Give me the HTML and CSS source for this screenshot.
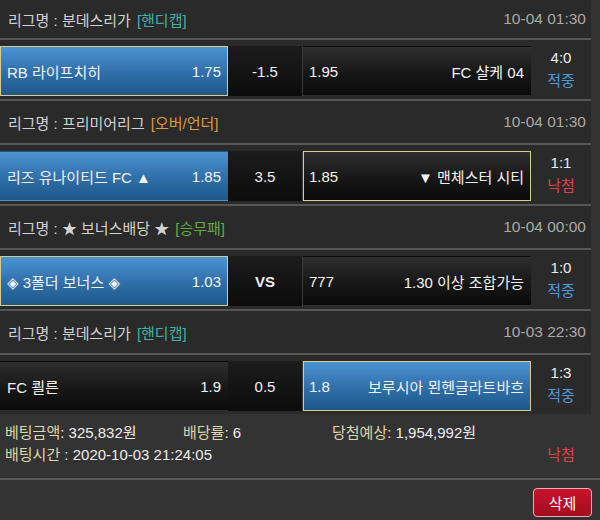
FILE: index.html
```html
<!DOCTYPE html>
<html lang="ko">
<head>
<meta charset="utf-8">
<title>배팅내역</title>
<link rel="stylesheet" href="styles.css">
</head>
<body>
<div class="page">
  <div class="list">
    <section class="game">
      <div class="league first">
        <span class="lname">리그명 : 분데스리가</span>
        <span class="ltype teal">[핸디캡]</span>
        <span class="date">10-04 01:30</span>
      </div>
      <div class="match">
        <div class="bar">
          <div class="team blue pick"><span>RB 라이프치히</span><span>1.75</span></div>
          <div class="mid">-1.5</div>
          <div class="team dark"><span>1.95</span><span>FC 샬케 04</span></div>
        </div>
        <div class="score"><div>4:0</div><div class="hit">적중</div></div>
      </div>
    </section>

    <section class="game">
      <div class="league">
        <span class="lname">리그명 : 프리미어리그</span>
        <span class="ltype orange">[오버/언더]</span>
        <span class="date">10-04 01:30</span>
      </div>
      <div class="match">
        <div class="bar">
          <div class="team blue"><span>리즈 유나이티드 FC ▲</span><span>1.85</span></div>
          <div class="mid">3.5</div>
          <div class="team dark pick"><span>1.85</span><span>▼ 맨체스터 시티</span></div>
        </div>
        <div class="score"><div>1:1</div><div class="miss">낙첨</div></div>
      </div>
    </section>

    <section class="game">
      <div class="league">
        <span class="lname">리그명 : ★ 보너스배당 ★</span>
        <span class="ltype green">[승무패]</span>
        <span class="date">10-04 00:00</span>
      </div>
      <div class="match">
        <div class="bar">
          <div class="team blue pick"><span>◈ 3폴더 보너스 ◈</span><span>1.03</span></div>
          <div class="mid vs">VS</div>
          <div class="team dark"><span>777</span><span>1.30 이상 조합가능</span></div>
        </div>
        <div class="score"><div>1:0</div><div class="hit">적중</div></div>
      </div>
    </section>

    <section class="game">
      <div class="league">
        <span class="lname">리그명 : 분데스리가</span>
        <span class="ltype teal">[핸디캡]</span>
        <span class="date">10-03 22:30</span>
      </div>
      <div class="match">
        <div class="bar">
          <div class="team dark"><span>FC 쾰른</span><span>1.9</span></div>
          <div class="mid">0.5</div>
          <div class="team blue pick"><span>1.8</span><span>보루시아 묀헨글라트바흐</span></div>
        </div>
        <div class="score"><div>1:3</div><div class="hit">적중</div></div>
      </div>
    </section>
  </div>

  <div class="info">
    <div class="cell"><span class="label">베팅금액</span>: 325,832원</div>
    <div class="cell"><span class="label">배당률</span>: 6</div>
    <div class="cell"><span class="label">당첨예상</span>: 1,954,992원</div>
    <div class="cell"></div>
    <div class="cell wide"><span class="label">배팅시간</span> : 2020-10-03 21:24:05</div>
    <div class="cell result miss">낙첨</div>
  </div>

  <div class="actions">
    <button class="del" type="button">삭제</button>
  </div>
</div>
</body>
</html>
```

FILE: styles.css
```css
* { box-sizing: border-box; }

html, body {
  margin: 0;
  padding: 0;
  background: #333333;
}

body {
  font-family: "Liberation Sans", "Noto Sans CJK KR", "DejaVu Sans", sans-serif;
  font-size: 15px;
  color: #ececec;
  width: 600px;
  height: 520px;
  overflow: hidden;
}

.page {
  display: flex;
  flex-direction: column;
}

.list {
  width: 591px;
  background: #2a2a2a;
}

.game + .game .league {
  border-top: 2px solid #575757;
}

.league {
  height: 44px;
  display: flex;
  align-items: center;
  padding: 0 5px 0 8px;
  color: #d2d2d2;
  white-space: nowrap;
}

.league.first {
  height: 38px;
}

.ltype {
  margin-left: 6px;
}

.teal { color: #3fb3a7; }
.orange { color: #dc9c3c; }
.green { color: #5daf3e; }

.date {
  margin-left: auto;
  color: #a9a9a9;
  font-size: 15.5px;
}

.match {
  border-top: 2px solid #575757;
  height: 61px;
  padding: 6px 0 3px;
  display: flex;
  align-items: flex-start;
}

.bar {
  width: 531px;
  height: 50px;
  display: flex;
  background: linear-gradient(#1c1c1c, #0c0c0c);
}

.team {
  width: 228px;
  height: 50px;
  display: flex;
  align-items: center;
  justify-content: space-between;
  padding: 0 6px;
  border: 1px solid transparent;
  color: #f2f2f2;
  white-space: nowrap;
}

.team.blue {
  background: linear-gradient(#4c93d3, #2f6ea8 55%, #1d5888);
}

.team.dark {
  background: linear-gradient(#2e2e2e, #151515 60%, #0b0b0b);
}

.team.pick {
  border-color: #d8cb8e;
}

.bar .team:last-child {
  padding-left: 5px;
}

.mid {
  width: 75px;
  height: 50px;
  display: flex;
  align-items: center;
  justify-content: center;
  border-right: 1px solid #3a3a3a;
  color: #f0f0f0;
}

.mid.vs {
  font-weight: bold;
}

.score {
  width: 60px;
  text-align: center;
  line-height: 23px;
  color: #ececec;
}

.hit { color: #4f9ade; }
.miss { color: #e04343; }

.info {
  width: 600px;
  display: grid;
  grid-template-columns: 178px 149px 1fr 60px;
  grid-auto-rows: 22px;
  align-items: center;
  padding: 6px 9px 14px 5px;
  border-bottom: 2px solid #575757;
  color: #ececec;
  white-space: nowrap;
}

.info .wide {
  grid-column: 1 / 4;
}

.info .result {
  text-align: center;
  color: #e04343;
}

.label {
  color: #ded7a8;
}

.actions {
  height: 41px;
  display: flex;
  justify-content: flex-end;
  align-items: flex-start;
  padding: 8px 8px 0 0;
}

.del {
  width: 59px;
  height: 29px;
  border: 1px solid #e3aeb6;
  border-radius: 4px;
  background: linear-gradient(#c8122c, #a50c1e);
  color: #ffffff;
  font-family: "Liberation Sans", "Noto Sans CJK KR", sans-serif;
  font-size: 15px;
  padding: 0;
}
```
